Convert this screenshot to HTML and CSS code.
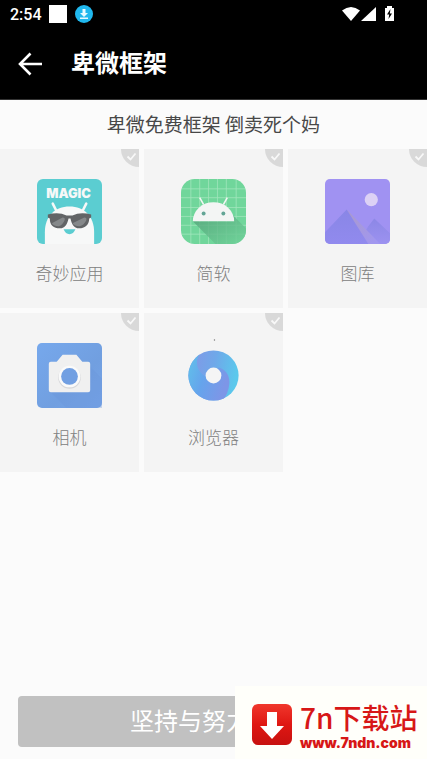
FILE: index.html
```html
<!DOCTYPE html>
<html lang="zh-CN">
<head>
<meta charset="utf-8">
<meta name="viewport" content="width=device-width, initial-scale=1">
<title>卑微框架</title>
<link rel="stylesheet" href="styles.css">
</head>
<body>
<svg class="defs" aria-hidden="true">
  <symbol id="corner" viewBox="0 0 18 18">
    <path d="M0 0H18V18A18 18 0 0 1 0 0Z" fill="#d9d9d9"/>
    <path d="M6.500 7.500L9.500 10.500L14.500 4.500" fill="none" stroke="#f8f8f8" stroke-width="1.800"/>
  </symbol>
</svg>
<header class="header">
  <div class="status">
    <span class="clock">2:54</span>
    <span class="square"></span>
    <svg class="download" viewBox="0 0 18 18"><circle cx="9" cy="9" r="9" fill="#20b8ee"/><path d="M7.500 4h3v4h2.500L9 12 5 8h2.500zM5 12.500h8V14H5z" fill="#e8faff"/></svg>
    <svg class="signals" viewBox="0 0 54 18">
      <path d="M1 5.500Q10 -1.500 19 5.500L10 16Z" fill="#fff"/>
      <path d="M20 16L35 2V16Z" fill="#fff"/>
      <path d="M44 3H46V1H51V3H53V16H44Z" fill="#fff"/>
      <path d="M49.500 4L46 9.500H48.200L47.500 14L51 8.500H48.800Z" fill="#000"/>
    </svg>
  </div>
  <div class="bar">
    <button class="back" aria-label="返回"><svg viewBox="0 0 24 24"><path d="M12.500 1.500L2 12L12.500 22.500M2 12H24" fill="none" stroke="#fff" stroke-width="2.600"/></svg></button>
    <h1 class="title">卑微框架</h1>
  </div>
</header>
<main class="content">
  <p class="notice">卑微免费框架 倒卖死个妈</p>
  <div class="grid">
    <button class="tile">
      <svg class="corner"><use href="#corner"/></svg>
      <svg class="icon" viewBox="0 0 66 66">
        <rect width="66" height="66" rx="6" fill="#5bcdd1"/>
        <text x="32" y="19" class="magic">MAGIC</text>
        <path d="M16 25L20 33M50 25L46 33" stroke="#f7f8f8" stroke-width="2.600" stroke-linecap="round"/>
        <path d="M8 66V54C8 38 18 28 33 28S58 38 58 54V66Z" fill="#f7f8f8"/>
        <path d="M11 36Q22 33 30 37H36Q44 33 55 36V39L53 40C53 47 48 50 43 50C37 50 35 45 34 40H32C31 45 29 50 23 50C17 50 13 47 13 40L11 39Z" fill="#626466"/>
        <path d="M15 45L26 39Q29 39 28 42Q26 47 22 48Q17 48 15 45ZM36 45L48 39Q51 39 50 42Q48 47 43 48Q38 48 36 45Z" fill="#85888a"/>
        <path d="M27 51H39Q37 56 33 56T27 51Z" fill="#5bcdd1"/>
      </svg>
      <span class="name">奇妙应用</span>
    </button>
    <button class="tile">
      <svg class="corner"><use href="#corner"/></svg>
      <svg class="icon" viewBox="0 0 66 66">
        <defs><clipPath id="green-clip"><rect width="66" height="66" rx="14"/></clipPath>
        <linearGradient id="droid-shade" x1="0" y1="0" x2="1" y2="1"><stop stop-color="#519d76"/><stop offset="1" stop-color="#70d49a"/></linearGradient></defs>
        <g clip-path="url(#green-clip)">
          <rect width="66" height="66" fill="#70d69b"/>
          <path d="M10 0V66M19 0V66M28 0V66M37 0V66M46 0V66M56 0V66M0 10H66M0 19H66M0 29H66M0 38H66M0 47H66M0 56H66" stroke="#a2e5bd" stroke-width=".8"/>
          <path d="M12 43L35 66H66V50L50 34L54 43Z" fill="url(#droid-shade)" opacity=".8"/>
        </g>
        <path d="M12 43A21 19.500 0 0 1 54 43Z" fill="#f3f5f4"/>
        <path d="M19 19L23 26M47 19L43 26" stroke="#f3f5f4" stroke-width="1.600"/>
        <circle cx="23" cy="35" r="2" fill="#62a595"/><circle cx="43" cy="35" r="2" fill="#62a595"/>
      </svg>
      <span class="name">简软</span>
    </button>
    <button class="tile">
      <svg class="corner"><use href="#corner"/></svg>
      <svg class="icon" viewBox="0 0 66 66">
        <defs><clipPath id="photo-clip"><rect width="66" height="66" rx="5"/></clipPath>
        <linearGradient id="photo-ray" x1="0" y1="0" x2=".8" y2="1"><stop stop-color="#aa9acb"/><stop offset="1" stop-color="#a197f0"/></linearGradient>
        <linearGradient id="photo-peak" x1="0" y1="0" x2="0" y2="1"><stop stop-color="#8986e6"/><stop offset="1" stop-color="#918aee"/></linearGradient>
        <linearGradient id="photo-hill" x1="0" y1="0" x2="0" y2="1"><stop stop-color="#8c87e6"/><stop offset="1" stop-color="#9c92f0"/></linearGradient></defs>
        <g clip-path="url(#photo-clip)">
          <rect width="66" height="66" fill="#a092f2"/>
          <path d="M33 66L44 48L50 40L66 55V66Z" fill="url(#photo-hill)"/>
          <path d="M22 31L56 66H43Z" fill="url(#photo-ray)"/>
          <path d="M0 54L22 31L44 66H0Z" fill="url(#photo-peak)"/>
        </g>
        <circle cx="47" cy="21" r="6.700" fill="#dcd1f5"/>
      </svg>
      <span class="name">图库</span>
    </button>
    <button class="tile">
      <svg class="corner"><use href="#corner"/></svg>
      <svg class="icon" viewBox="0 0 66 66">
        <defs><linearGradient id="camera-bg" x1="0" y1="0" x2="1" y2="1"><stop stop-color="#76a8ec"/><stop offset=".6" stop-color="#719fe0"/><stop offset="1" stop-color="#76a4e8"/></linearGradient></defs>
        <rect width="66" height="66" rx="5" fill="url(#camera-bg)"/>
        <path d="M14 50H53L54 24L66 36V66H30Z" fill="#6996d9" opacity=".35"/>
        <path d="M14 19H20L26 12H40L46 19H52Q54 19 54 21V48Q54 50 52 50H14Q12 50 12 48V21Q12 19 14 19Z" fill="#f0f0f0"/>
        <circle cx="33" cy="35" r="11.500" fill="#d7d8db"/><circle cx="33" cy="34" r="11" fill="#fafafa"/><circle cx="33" cy="34" r="8.500" fill="#719fe2"/>
      </svg>
      <span class="name">相机</span>
    </button>
    <button class="tile">
      <svg class="corner"><use href="#corner"/></svg>
      <svg class="icon" viewBox="0 0 66 66">
        <defs><clipPath id="swirl-clip"><circle cx="33" cy="33" r="25.500"/></clipPath>
        <linearGradient id="swirl-top" x1="0" y1="0" x2="1" y2=".2"><stop offset=".2" stop-color="#7d9ce7"/><stop offset=".55" stop-color="#6fa8e9"/><stop offset="1" stop-color="#5bc8ec"/></linearGradient>
        <linearGradient id="swirl-bottom" x1="0" y1="0" x2="1" y2=".4"><stop stop-color="#60c5ea"/><stop offset=".5" stop-color="#65a4ec"/><stop offset="1" stop-color="#7d96e7"/></linearGradient></defs>
        <g clip-path="url(#swirl-clip)">
          <rect x="7" y="7" width="52" height="52" fill="url(#swirl-top)"/>
          <path d="M23 7C14 14 15 24 20 30C25 36 31 37 34 32L38 25C46 27 50 34 49 42Q48 52 42 59H7V7Z" fill="url(#swirl-bottom)"/>
        </g>
        <circle cx="33" cy="33" r="8" fill="#f5f5f5"/><circle cx="34" cy="-3" r=".7" fill="#777"/>
      </svg>
      <span class="name">浏览器</span>
    </button>
  </div>
</main>
<footer class="footer">
  <button class="action">坚持与努力</button>
  <a class="brand" href="#">
    <svg class="brand-icon" viewBox="0 0 40 41">
      <defs><linearGradient id="brand-red" x1="0" y1="0" x2="0" y2="1"><stop stop-color="#f0372c"/><stop offset=".5" stop-color="#df1713"/><stop offset="1" stop-color="#c71110"/></linearGradient></defs>
      <rect width="40" height="41" rx="6" fill="url(#brand-red)"/><path d="M15 8H25V22H32L20 35L8 22H15Z" fill="#fff"/>
    </svg>
    <span class="brand-text"><span class="brand-name">7n下载站</span><span class="brand-url">www.7ndn.com</span></span>
  </a>
</footer>
</body>
</html>
```
FILE: styles.css
```css
* { box-sizing: border-box; }
body {
  margin: 0;
  min-height: 100vh;
  display: flex;
  flex-direction: column;
  background: #fbfbfb;
  font-family: "Noto Sans CJK SC", sans-serif;
}
button { border: 0; padding: 0; font: inherit; }
svg { display: block; }
.defs { position: absolute; width: 0; height: 0; }
.header { background: #000; color: #fff; padding-bottom: 12px; border-bottom: 1px solid #333; }
.status { display: flex; align-items: center; height: 28px; padding: 0 32px 0 10px; }
.clock { font: 500 16px/28px Roboto, sans-serif; margin-top: 2px; }
.square { width: 18px; height: 18px; margin-left: 7px; background: #fff; }
.download { width: 18px; height: 18px; margin-left: 8px; }
.signals { width: 54px; height: 18px; margin-left: auto; }
.bar { display: flex; align-items: center; gap: 29px; height: 59px; padding: 0 18px; }
.back { background: none; height: 24px; margin-top: 12px; }
.back svg { width: 24px; height: 24px; }
.title { margin: 9px 0 0; font-size: 24px; line-height: 36px; font-weight: 700; }
.notice { margin: 0; padding: 9px 8px 11px; font-size: 19px; line-height: 29px; color: #484848; text-align: center; }
.grid { display: grid; grid-template-columns: repeat(3, 1fr); gap: 5px; }
.tile {
  position: relative;
  display: flex;
  flex-direction: column;
  align-items: center;
  gap: 17px;
  padding: 30px 0 23px;
  background: #f4f4f4;
}
.corner { position: absolute; top: 0; right: 0; width: 18px; height: 18px; }
.icon { width: 65px; height: 65px; overflow: visible; }
.magic { font: 900 13px Inter, sans-serif; fill: #f7f8f8; text-anchor: middle; }
.name { font-size: 17px; line-height: 24px; font-weight: 300; color: #808080; }
.footer { position: relative; margin-top: auto; padding: 0 18px 12px; }
.action {
  display: block;
  width: 100%;
  padding: 6px 0 9px 112px;
  border-radius: 4px;
  background: #c1c1c1;
  color: #fff;
  font-size: 24px;
  line-height: 36px;
  text-align: left;
}
.brand {
  position: absolute;
  right: 0;
  bottom: 0;
  display: flex;
  align-items: center;
  gap: 8px;
  width: 192px;
  height: 73px;
  padding: 4px 12px 0 17px;
  background: #fffffa;
  color: #d71717;
  text-decoration: none;
}
.brand-icon { width: 40px; height: 41px; flex: none; }
.brand-text { display: flex; flex-direction: column; white-space: nowrap; }
.brand-name { font-size: 28px; line-height: 36px; font-weight: 500; }
.brand-url { font: 900 14px/16px Inter, sans-serif; }
```
